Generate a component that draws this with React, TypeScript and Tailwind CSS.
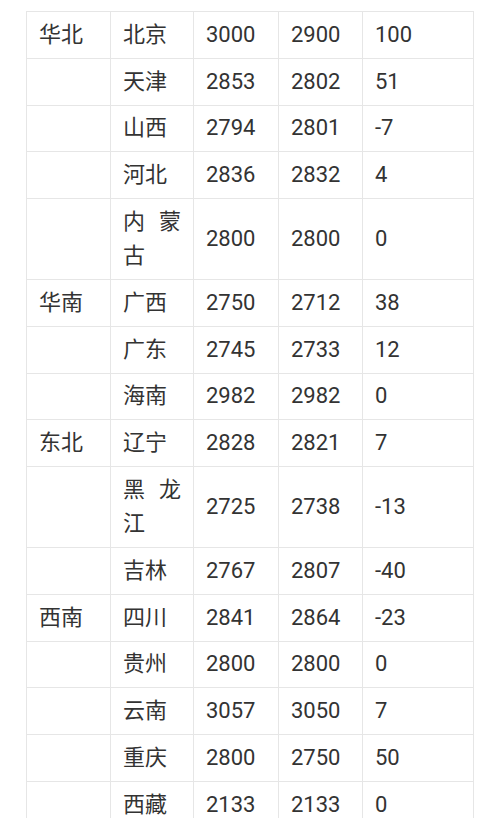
const rows: [string, string, string, string, string][] = [
  ["华北", "北京", "3000", "2900", "100"],
  ["", "天津", "2853", "2802", "51"],
  ["", "山西", "2794", "2801", "-7"],
  ["", "河北", "2836", "2832", "4"],
  ["", "内蒙古", "2800", "2800", "0"],
  ["华南", "广西", "2750", "2712", "38"],
  ["", "广东", "2745", "2733", "12"],
  ["", "海南", "2982", "2982", "0"],
  ["东北", "辽宁", "2828", "2821", "7"],
  ["", "黑龙江", "2725", "2738", "-13"],
  ["", "吉林", "2767", "2807", "-40"],
  ["西南", "四川", "2841", "2864", "-23"],
  ["", "贵州", "2800", "2800", "0"],
  ["", "云南", "3057", "3050", "7"],
  ["", "重庆", "2800", "2750", "50"],
  ["", "西藏", "2133", "2133", "0"],
];

export default function App() {
  return (
    <div className="min-h-screen bg-white px-[26px] pt-[11px] font-['Roboto','Noto_Sans_CJK_SC',sans-serif] text-[22px] leading-[34.25px] text-[#333]">
      <table className="w-full table-fixed border-collapse">
        <colgroup>
          <col className="w-[84px]" />
          <col className="w-[83px]" />
          <col className="w-[85px]" />
          <col className="w-[84px]" />
          <col />
        </colgroup>
        <tbody>
          {rows.map((r, i) => (
            <tr key={i}>
              {r.map((c, j) => (
                <td
                  key={j}
                  className="border border-[#e6e6e6] px-3 py-[5.75px] text-justify align-middle"
                >
                  {c}
                </td>
              ))}
            </tr>
          ))}
        </tbody>
      </table>
    </div>
  );
}
